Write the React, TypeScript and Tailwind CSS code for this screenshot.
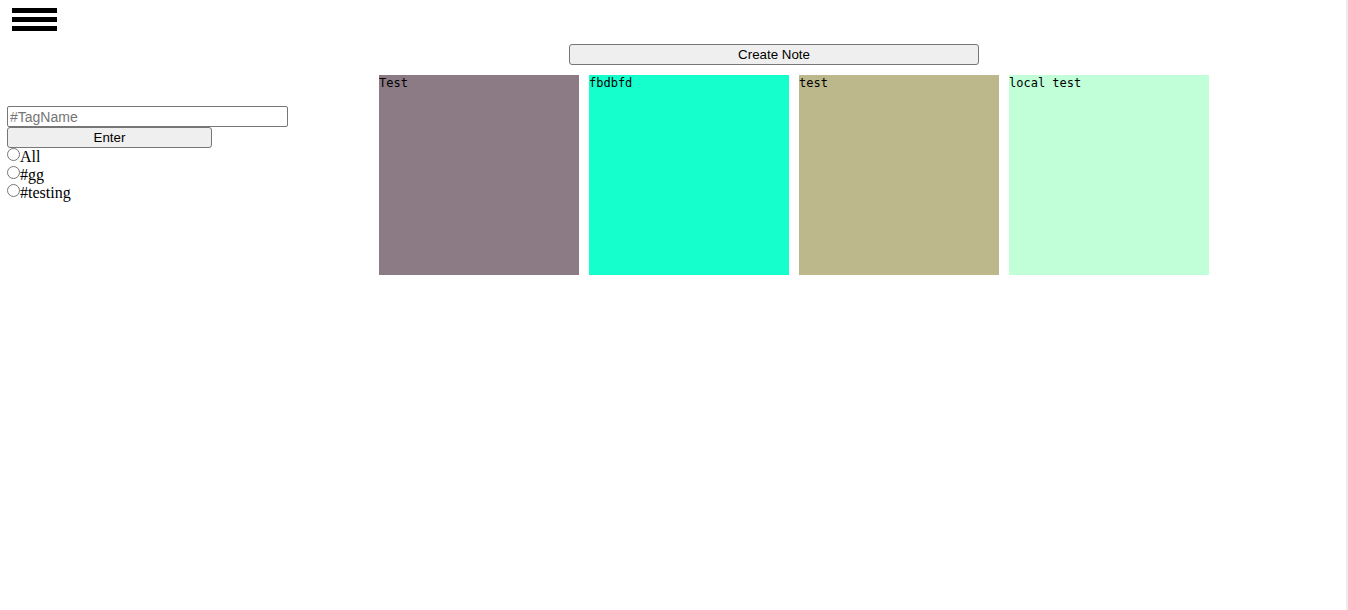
import { useState } from "react";

type Note = { id: number; text: string; color: string };

const NOTES: Note[] = [
  { id: 1, text: "Test", color: "bg-[#8c7b85]" },
  { id: 2, text: "fbdbfd", color: "bg-[#14ffcc]" },
  { id: 3, text: "test", color: "bg-[#bdb88c]" },
  { id: 4, text: "local test", color: "bg-[#c0ffd8]" },
];

const TAGS = ["All", "#gg", "#testing"];

export default function App() {
  const [tag, setTag] = useState("");
  const [filtro, setFiltro] = useState("");

  return (
    <div className="relative min-h-screen bg-white text-black border-r-2 border-[#ececec] font-['Liberation_Serif',serif]">
      <div className="pl-[12px] pt-[8px] h-[44px]">
        <button className="flex flex-col gap-[4px] w-[45px]">
          <span className="block h-[5px] w-full bg-black" />
          <span className="block h-[5px] w-full bg-black" />
          <span className="block h-[5px] w-full bg-black" />
        </button>
      </div>

      <div className="flex">
        <aside className="w-[379px] shrink-0 pl-[7px] pt-[62px]">
          <input
            value={tag}
            onChange={(e) => setTag(e.target.value)}
            placeholder="#TagName"
            className="block w-[281px] h-[21px] border border-[#767676] rounded-[2px] px-[2px] text-[14px] leading-none font-['Liberation_Sans',Arial,sans-serif] placeholder:text-[#757575] outline-none"
          />
          <button className="block w-[205px] h-[21px] border border-[#767676] rounded-[3px] bg-[#efefef] text-[13.33px] font-['Liberation_Sans',Arial,sans-serif]">
            Enter
          </button>
          <div className="flex flex-col text-[16px] leading-[18px]">
            {TAGS.map((t) => (
              <label key={t} className="flex items-start">
                <input
                  type="radio"
                  name="tag"
                  checked={filtro === t}
                  onChange={() => setFiltro(t)}
                  className="m-0 w-[13px] h-[13px] appearance-none rounded-full border border-[#767676] bg-white"
                />
                <span>{t}</span>
              </label>
            ))}
          </div>
        </aside>

        <main className="flex-1">
          <button className="ml-[190px] block w-[410px] h-[21px] border border-[#767676] rounded-[3px] bg-[#efefef] text-[13.33px] font-['Liberation_Sans',Arial,sans-serif]">
            Create Note
          </button>
          <div className="mt-[10px] flex gap-[10px]">
            {NOTES.map((n) => (
              <div
                key={n.id}
                className={`${n.color} w-[200px] h-[200px] font-['DejaVu_Sans_Mono',monospace] text-[12px] leading-[16px]`}
              >
                {n.text}
              </div>
            ))}
          </div>
        </main>
      </div>
    </div>
  );
}
